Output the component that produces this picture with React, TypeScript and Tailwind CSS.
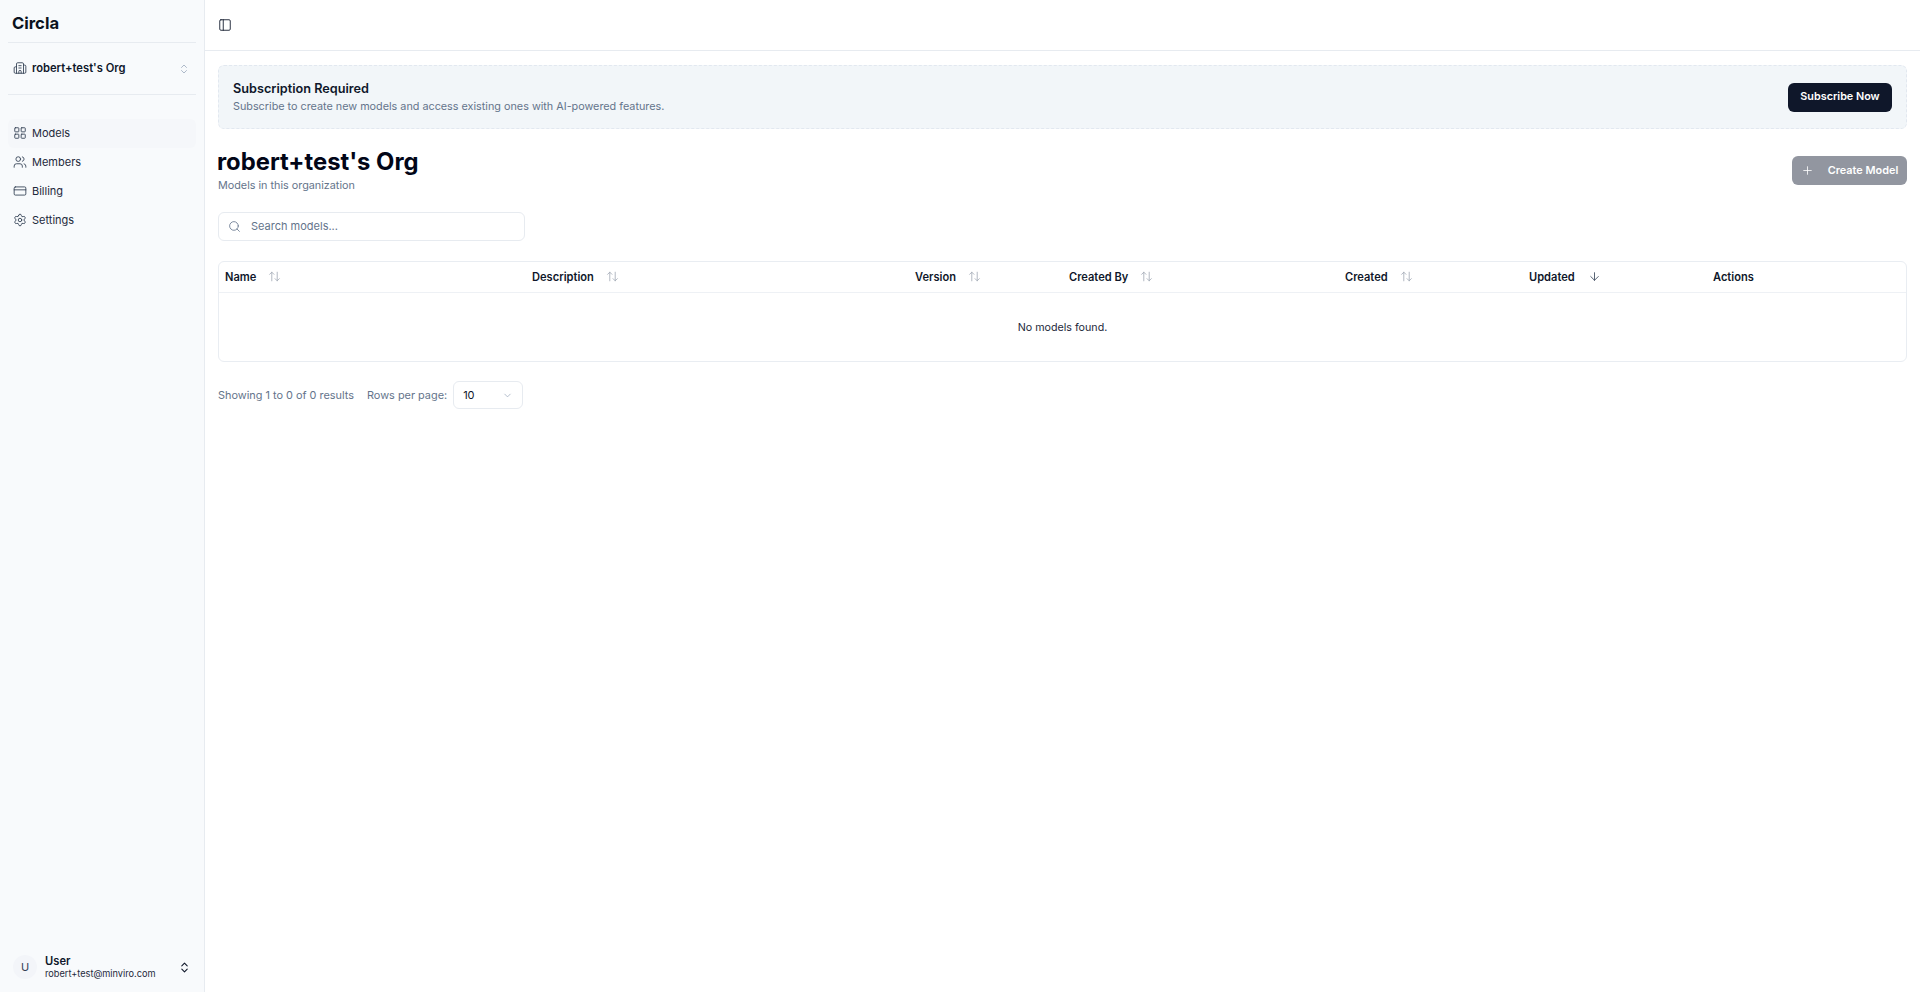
import React from "react";
import {
  ArrowDown,
  ArrowUpDown,
  Building2,
  ChevronDown,
  ChevronsUpDown,
  CreditCard,
  LayoutGrid,
  PanelLeft,
  Plus,
  Search,
  Settings,
  Users,
} from "lucide-react";

const navItems = [
  { label: "Models", icon: LayoutGrid, active: true },
  { label: "Members", icon: Users },
  { label: "Billing", icon: CreditCard },
  { label: "Settings", icon: Settings },
];

const columns = [
  { label: "Name", width: "w-[307px]" },
  { label: "Description", width: "w-[383px]" },
  { label: "Version", width: "w-[154px]" },
  { label: "Created By", width: "w-[276px]" },
  { label: "Created", width: "w-[184px]" },
  { label: "Updated", width: "w-[184px]", sorted: true },
  { label: "Actions", width: "flex-1", plain: true },
];

function Sidebar() {
  return (
    <aside className="flex h-full w-[205px] shrink-0 flex-col border-r border-[#e7ebf0] bg-[#f8fafc]">
      <div className="mx-2 flex h-[43px] items-center border-b border-[#e7ebf0] px-1 pt-[4px]">
        <span className="text-[16.6px] leading-6 font-bold text-[#0b1220]">Circla</span>
      </div>
      <div className="mx-2 flex h-[52px] items-center justify-between border-b border-[#e7ebf0] pr-[6px] pl-[5px]">
        <div className="flex items-center gap-[5px]">
          <Building2 className="h-[14px] w-[14px] text-[#334155]" strokeWidth={1.5} />
          <span className="text-[11.2px] font-semibold text-[#0f172a]">robert+test's Org</span>
        </div>
        <ChevronsUpDown className="h-3 w-3 text-[#94a3b8]" strokeWidth={1.5} />
      </div>
      <nav className="mt-[24px] flex flex-col gap-[0.5px] px-2">
        {navItems.map((item) => {
          const Icon = item.icon;
          return (
            <div
              key={item.label}
              className={
                item.active
                  ? "flex h-[28.5px] items-center gap-[5px] rounded-md bg-[#f5f7fa] pl-[5px]"
                  : "flex h-[28.5px] items-center gap-[5px] rounded-md pl-[5px]"
              }
            >
              <Icon className="h-[14px] w-[14px] text-[#334155]" strokeWidth={1.5} />
              <span className="text-[11px] text-[#1e293b]">{item.label}</span>
            </div>
          );
        })}
      </nav>
      <div className="mt-auto flex h-[50px] items-center justify-between pr-[13px] pl-[13px]">
        <div className="flex items-center gap-[8px]">
          <div className="flex h-[24px] w-[24px] items-center justify-center rounded-full bg-[#f3f5f9] text-[11px] text-[#334155]">
            U
          </div>
          <div className="flex flex-col">
            <span className="text-[11.2px] leading-[13px] font-semibold text-[#0f172a]">User</span>
            <span className="text-[9.2px] leading-[12px] text-[#1e293b]">robert+test@minviro.com</span>
          </div>
        </div>
        <ChevronsUpDown className="h-[13px] w-[13px] text-[#0f172a]" strokeWidth={2} />
      </div>
    </aside>
  );
}

function ModelsTable() {
  return (
    <div className="mt-5 rounded-md border border-[#e9edf2]">
      <div className="flex h-[31px] items-center border-b border-[#eef1f5]">
        {columns.map((col) => (
          <div key={col.label} className={`${col.width} flex items-center pl-[6px]`}>
            <span className="text-[11.1px] font-semibold text-[#0f172a]">{col.label}</span>
            {col.plain ? null : col.sorted ? (
              <ArrowDown className="ml-[13px] h-[13px] w-[13px] text-[#334155]" strokeWidth={1.5} />
            ) : (
              <ArrowUpDown className="ml-[12px] h-[13px] w-[13px] text-[#a1a9b5]" strokeWidth={1.5} />
            )}
          </div>
        ))}
      </div>
      <div className="flex h-[68px] items-center justify-center pt-[2px] text-[10.7px] text-[#1e293b]">
        No models found.
      </div>
    </div>
  );
}

export default function App() {
  return (
    <div className="flex h-[992px] w-full font-['Inter',sans-serif]">
      <Sidebar />
      <main className="flex flex-1 flex-col bg-white">
        <header className="flex h-[51px] items-center border-b border-[#e7ebf0] pl-[13px]">
          <PanelLeft className="h-[14px] w-[14px] text-[#0f172a]" strokeWidth={1.5} />
        </header>
        <div className="flex flex-col px-[13px] pt-[14px]">
          <div className="flex h-[64px] items-center justify-between rounded-md border border-dashed border-[#e2e8f0] bg-[#f2f6f9] pr-[14px] pl-[14px]">
            <div className="flex flex-col">
              <span className="text-[12.7px] leading-[18px] font-semibold text-[#0f172a]">
                Subscription Required
              </span>
              <span className="text-[10.8px] leading-[17px] text-[#64748b]">
                Subscribe to create new models and access existing ones with AI-powered features.
              </span>
            </div>
            <button className="flex h-[29px] w-[104px] items-center justify-center rounded-md bg-[#0f172a] text-[10.8px] font-semibold text-white">
              Subscribe Now
            </button>
          </div>

          <div className="mt-[18px] flex items-start justify-between">
            <div className="flex flex-col">
              <h1 className="-ml-[1px] text-[23.8px] leading-[30px] font-bold text-[#020617]">robert+test's Org</h1>
              <span className="pt-[1px] text-[10.8px] leading-[15px] text-[#64748b]">Models in this organization</span>
            </div>
            <button className="mt-[9px] flex h-[29px] w-[115px] items-center justify-center gap-[14px] rounded-md bg-[#9296a0] text-[10.9px] font-semibold text-white">
              <Plus className="h-[13px] w-[13px]" strokeWidth={1.5} />
              Create Model
            </button>
          </div>

          <div className="mt-[19px] flex h-[29px] w-[307px] items-center rounded-md border border-[#e7ebf0] pl-[9px]">
            <Search className="h-[13px] w-[13px] text-[#64748b]" strokeWidth={1.5} />
            <span className="ml-[10px] text-[11px] text-[#64748b]">Search models...</span>
          </div>

          <ModelsTable />

          <div className="mt-[19px] flex items-center">
            <span className="text-[10.9px] text-[#64748b]">Showing 1 to 0 of 0 results</span>
            <span className="ml-[13px] text-[10.9px] text-[#64748b]">Rows per page:</span>
            <div className="ml-[6px] flex h-[28px] w-[70px] items-center justify-between rounded-md border border-[#e7ebf0] pr-[9px] pl-[9px]">
              <span className="text-[11px] text-[#0f172a]">10</span>
              <ChevronDown className="h-[11px] w-[11px] text-[#94a3b8]" strokeWidth={1.5} />
            </div>
          </div>
        </div>
      </main>
    </div>
  );
}
